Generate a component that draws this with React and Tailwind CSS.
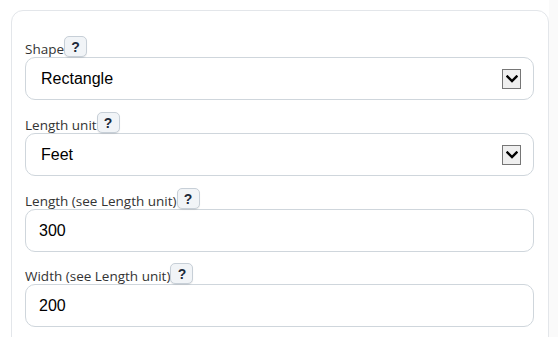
import React from "react";

function Help() {
  return (
    <span className="inline-flex h-[21px] w-[23px] items-center justify-center rounded-[5px] border border-[#c7cfd7] bg-[#f1f4f7] text-[14px] font-bold leading-none text-[#1d2a3a] shadow-[0_1px_1px_rgba(0,0,0,0.08)]" style={{ fontFamily: "'Liberation Sans', Arial, sans-serif" }}>
      ?
    </span>
  );
}

function Label({ children }) {
  return (
    <div className="flex h-[21px] items-end">
      <span className="pb-[1px] text-[13.5px] leading-none text-[#333]" style={{ fontFamily: "'Open Sans', 'Noto Sans', sans-serif" }}>
        {children}
      </span>
      <Help />
    </div>
  );
}

function Arrow() {
  return (
    <span className="flex h-[20px] w-[19px] items-center justify-center border border-[#767676] bg-[#efefef]">
      <svg width="12" height="8" viewBox="0 0 12 8">
        <path d="M1.5 1.5 L6 6 L10.5 1.5" fill="none" stroke="#000" strokeWidth="2.4" strokeLinecap="square" />
      </svg>
    </span>
  );
}

function SelectBox({ value }) {
  return (
    <div className="flex h-[43px] items-center justify-between rounded-[10px] border border-[#cfd6dc] bg-white pl-[15px] pr-[12px] text-[16px] text-black" style={{ fontFamily: "'Liberation Sans', Arial, sans-serif" }}>
      <span>{value}</span>
      <Arrow />
    </div>
  );
}

function InputBox({ value }) {
  return (
    <div className="flex h-[43px] items-center rounded-[10px] border border-[#cfd6dc] bg-white pl-[13px] text-[16px] text-black" style={{ fontFamily: "'Liberation Sans', Arial, sans-serif" }}>
      {value}
    </div>
  );
}

export default function App() {
  return (
    <div className="flex h-[337px] w-[558px] overflow-hidden bg-white">
      <div className="pl-[11px] pt-[10px]">
        <div className="h-[360px] w-[538px] rounded-[12px] border border-[#e3e6ea] bg-white pl-[13px] pr-[14px] pt-[25px]">
          <Label>Shape</Label>
          <SelectBox value="Rectangle" />
          <div className="h-[12px]" />
          <Label>Length unit</Label>
          <SelectBox value="Feet" />
          <div className="h-[12px]" />
          <Label>Length (see Length unit)</Label>
          <InputBox value="300" />
          <div className="h-[11px]" />
          <Label>Width (see Length unit)</Label>
          <InputBox value="200" />
        </div>
      </div>
      <div className="flex-1 bg-[#fafafa]" />
    </div>
  );
}
